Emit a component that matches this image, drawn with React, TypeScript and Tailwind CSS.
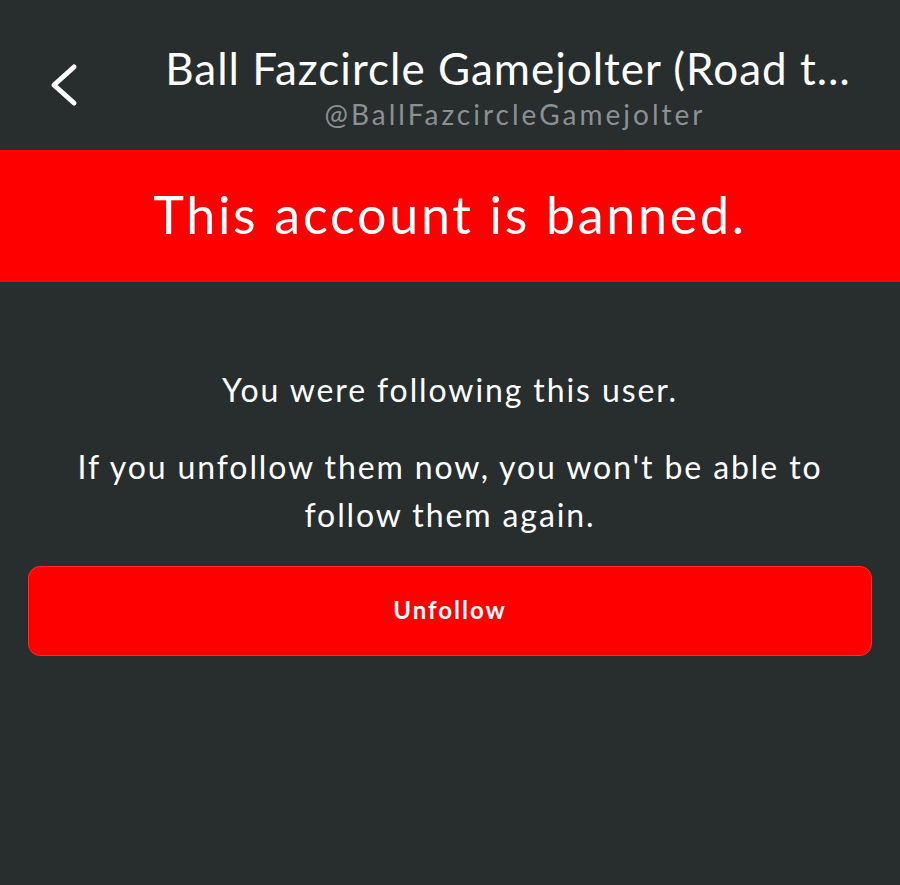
import React from 'react';

const App = () => {
  return (
    <div className="w-[900px] h-[885px] bg-[#282d2e] text-white font-['Lato',sans-serif] overflow-hidden">
      {/* Header */}
      <div className="h-[150px] flex items-start">
        <div className="w-[130px] pl-[48px] pt-[63px]">
          <svg width="32" height="48" viewBox="0 0 32 48" fill="none">
            <path d="M26 4 L6 22 L26 40" stroke="white" strokeWidth="5" strokeLinecap="round" strokeLinejoin="round" />
          </svg>
        </div>
        <div className="flex-1 flex flex-col items-center pt-[42px] pr-[14px]">
          <div className="text-[44px] leading-[52px] tracking-[1px] whitespace-nowrap">Ball Fazcircle Gamejolter (Road t…</div>
          <div className="mt-[4px] text-[28px] leading-[32px] text-[#8b9192] tracking-[3px] pl-[14px]">@BallFazcircleGamejolter</div>
        </div>
      </div>

      {/* Banned banner */}
      <div className="h-[132px] bg-[#ff0000] flex items-center justify-center">
        <div className="text-[52px] tracking-[2.7px] pb-[4px]">This account is banned.</div>
      </div>

      {/* Body */}
      <div className="pt-[88px] flex flex-col items-center text-[32px] tracking-[1.9px]">
        <p className="leading-[40px]">You were following this user.</p>
        <p className="mt-[33px] leading-[48px] text-center w-[800px]">
          If you unfollow them now, you won't be able to follow them again.
        </p>
      </div>

      <div className="px-[28px] mt-[27px]">
        <button className="w-full h-[90px] bg-[#ff0000] rounded-[12px] border border-[#ff2a2a] text-[24px] font-bold tracking-[2px] pb-[2px]">
          Unfollow
        </button>
      </div>
    </div>
  );
};

export default App;
